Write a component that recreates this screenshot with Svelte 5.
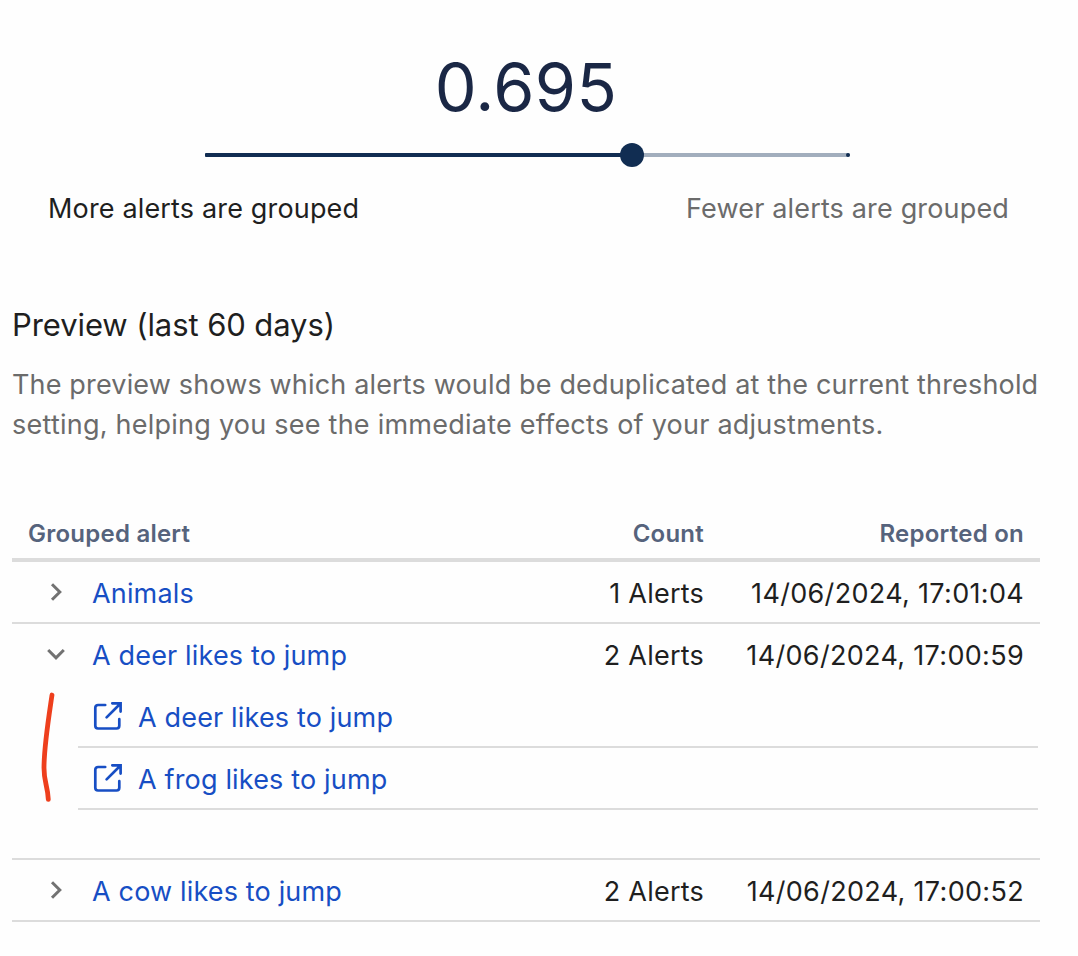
<script>
  const value = 0.695;
  const progress = 66.3;

  const groups = [
    { name: 'Animals', count: '1 Alerts', date: '14/06/2024, 17:01:04', open: false, children: [] },
    {
      name: 'A deer likes to jump',
      count: '2 Alerts',
      date: '14/06/2024, 17:00:59',
      open: true,
      children: ['A deer likes to jump', 'A frog likes to jump']
    },
    { name: 'A cow likes to jump', count: '2 Alerts', date: '14/06/2024, 17:00:52', open: false, children: [] }
  ];
</script>

<main>
  <section class="threshold">
    <div class="value">{value}</div>
    <div class="slider">
      <div class="fill" style="width: {progress}%"></div>
      <span class="end"></span>
      <span class="thumb" style="left: {progress}%"></span>
    </div>
    <div class="labels">
      <span class="more">More alerts are grouped</span>
      <span class="fewer">Fewer alerts are grouped</span>
    </div>
  </section>

  <section class="preview">
    <h2>Preview (last 60 days)</h2>
    <p>
      <span class="l1">The preview shows which alerts would be deduplicated at the current threshold</span><br />
      <span class="l2">setting, helping you see the immediate effects of your adjustments.</span>
    </p>
  </section>

  <section class="table">
    <div class="row head">
      <span class="name">Grouped alert</span>
      <span class="count">Count</span>
      <span class="date">Reported on</span>
    </div>
    {#each groups as group}
      <div class="group">
        <div class="row">
          <span class="name">
            <svg class="chevron" width="24" height="24" viewBox="0 0 24 24">
              <path d={group.open ? 'M4.2 8L12 15.8l7.8-7.8' : 'M8 4.2L15.8 12l-7.8 7.8'} />
            </svg>
            <a href="#group">{group.name}</a>
          </span>
          <span class="count">{group.count}</span>
          <span class="date">{group.date}</span>
        </div>
        {#if group.open}
          <div class="children">
            {#each group.children as child}
              <div class="child">
                <svg width="30" height="30" viewBox="0 0 30 30">
                  <path d="M12.2 4H5a2.7 2.7 0 0 0-2.7 2.7v18.1a2.7 2.7 0 0 0 2.7 2.7h18.6a2.700 2.700 0 0 0 2.700-2.700v-6.600" />
                  <path d="M19.300 2.300h8.300v8.300M13.600 16.400L27 3" />
                </svg>
                <a href="#alert">{child}</a>
              </div>
            {/each}
            <svg class="stroke" width="24" height="118" viewBox="0 0 24 118">
              <path d="M14 9C10.8 31 6 60 6 82C6 96 9.5 99 10.3 113.3" />
            </svg>
          </div>
        {/if}
      </div>
    {/each}
  </section>
</main>

<style>
  :global(body) {
    background: #fff;
  }
  main {
    box-sizing: border-box;
    width: 1078px;
    height: 956px;
    padding: 47px 38px 0 12px;
    overflow: hidden;
    font: 27px/40px Inter, sans-serif;
    letter-spacing: 0.16px;
    color: #1f1f1f;
    background: #fefefe;
  }
  .threshold {
    display: flex;
    flex-direction: column;
    align-items: center;
  }
  .value {
    height: 80px;
    font-size: 66.5px;
    line-height: 80px;
    letter-spacing: 0.4px;
    color: #1a2745;
  }
  .slider {
    position: relative;
    width: 645px;
    height: 4px;
    margin-top: 26px;
    margin-left: 2px;
    border-radius: 2px;
    background: #a2aebd;
  }
  .fill {
    height: 4px;
    border-radius: 1px;
    background: #112d52;
  }
  .end {
    position: absolute;
    right: 0;
    top: 0;
    width: 4px;
    height: 4px;
    border-radius: 50%;
    background: #112d52;
  }
  .thumb {
    position: absolute;
    top: -10px;
    width: 24px;
    height: 24px;
    margin-left: -12px;
    border-radius: 50%;
    background: #112d52;
  }
  .labels {
    display: flex;
    align-self: stretch;
    justify-content: space-between;
    margin-top: 32px;
    padding: 0 31px 0 36px;
  }
  .fewer,
  p {
    color: #6b6b6b;
  }
  .preview {
    margin-top: 76px;
  }
  h2 {
    margin: 0;
    font-size: 31px;
    font-weight: 400;
    line-height: 40px;
    letter-spacing: -0.09px;
  }
  p {
    margin: 20px 0 0;
    white-space: nowrap;
  }
  .l2 {
    letter-spacing: 0.24px;
  }
  .table {
    margin-top: 63px;
  }
  .row {
    box-sizing: border-box;
    display: flex;
    align-items: center;
    height: 60px;
    padding: 4px 16px 0;
  }
  .head {
    height: 54px;
    padding-top: 2px;
    padding-bottom: 0;
    border-bottom: 4px solid #dcdcdc;
    font-size: 24px;
    font-weight: 600;
    color: #56637c;
  }
  .group {
    border-bottom: 2px solid #dcdcdc;
  }
  .name {
    display: flex;
    flex: 1;
    align-items: center;
  }
  .count {
    width: 160px;
    text-align: right;
    letter-spacing: 0.22px;
  }
  .date {
    width: 320px;
    text-align: right;
    letter-spacing: 0.32px;
  }
  .head span {
    letter-spacing: 0.24px;
  }
  a {
    color: #174ec4;
    text-decoration: none;
  }
  svg {
    flex: none;
    fill: none;
    stroke: #174ec4;
    stroke-width: 2.7;
    stroke-linecap: round;
  }
  .chevron {
    margin: -4px 24px 0 16px;
    stroke: #727272;
    stroke-width: 3;
    stroke-linecap: butt;
  }
  .children {
    position: relative;
    margin: 2px 2px 0 66px;
    padding-bottom: 48px;
  }
  .child {
    box-sizing: border-box;
    display: flex;
    align-items: center;
    gap: 15px;
    height: 62px;
    padding: 4px 0 0 15px;
    border-bottom: 2px solid #dcdcdc;
  }
  .child svg {
    margin-top: -4px;
  }
  .stroke {
    position: absolute;
    left: -40px;
    top: 0;
    stroke: #ee3f1d;
    stroke-width: 4.8;
  }
</style>
